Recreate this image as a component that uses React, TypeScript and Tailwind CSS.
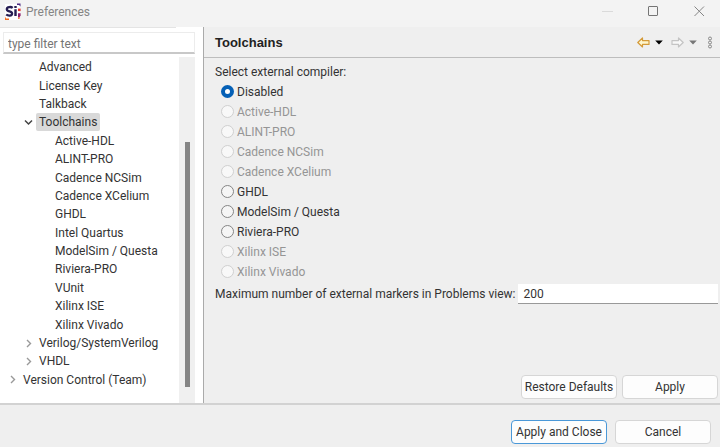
import { useState } from "react";

type TreeNode = { label: string; level: 0 | 1 | 2; arrow?: "open" | "closed" };

const tree: TreeNode[] = [
  { label: "Advanced", level: 1 },
  { label: "License Key", level: 1 },
  { label: "Talkback", level: 1 },
  { label: "Toolchains", level: 1, arrow: "open" },
  { label: "Active-HDL", level: 2 },
  { label: "ALINT-PRO", level: 2 },
  { label: "Cadence NCSim", level: 2 },
  { label: "Cadence XCelium", level: 2 },
  { label: "GHDL", level: 2 },
  { label: "Intel Quartus", level: 2 },
  { label: "ModelSim / Questa", level: 2 },
  { label: "Riviera-PRO", level: 2 },
  { label: "VUnit", level: 2 },
  { label: "Xilinx ISE", level: 2 },
  { label: "Xilinx Vivado", level: 2 },
  { label: "Verilog/SystemVerilog", level: 1, arrow: "closed" },
  { label: "VHDL", level: 1, arrow: "closed" },
  { label: "Version Control (Team)", level: 0, arrow: "closed" },
];

const compilers = [
  { label: "Disabled", enabled: true },
  { label: "Active-HDL", enabled: false },
  { label: "ALINT-PRO", enabled: false },
  { label: "Cadence NCSim", enabled: false },
  { label: "Cadence XCelium", enabled: false },
  { label: "GHDL", enabled: true },
  { label: "ModelSim / Questa", enabled: true },
  { label: "Riviera-PRO", enabled: true },
  { label: "Xilinx ISE", enabled: false },
  { label: "Xilinx Vivado", enabled: false },
];

const indent = { 0: "pl-2", 1: "pl-6", 2: "pl-10" };

const button =
  "h-6 w-24 whitespace-nowrap rounded border bg-[#fdfdfd] text-center leading-4";

function Logo() {
  return (
    <svg width="17" height="18" viewBox="0 0 17 18" aria-hidden="true">
      <rect width="15" height="16" y="1" fill="#fff" />
      <path d="M12 .5h3.500v3L14 2H12z" fill="#4b2a83" />
      <path d="M0 13.500 1 15.500H4V17H0z" fill="#f26a21" />
      <path
        d="M7.700 4.800C6.300 3.700 1.800 3.500 1.800 6.200c0 2.800 5.300 1.500 5.300 4.300 0 2.800-4.300 2.400-5.900 1"
        fill="none"
        stroke="#251c52"
        strokeWidth="2.300"
      />
      <path d="M9.300 6.200h2.400V13H9.300zM9.300 3h2.400v2.100H9.300z" fill="#251c52" />
      <path d="M13 5.600h2.600v2.500H13z" fill="#e4342b" />
      <path d="M13 10.300h2.600v2.300l-1.200 1.900H13z" fill="#8d1d6e" />
      <path d="M13.200 14.500h2l-1 1.500h-1z" fill="#f26a21" />
    </svg>
  );
}

function Chevron({ open }: { open: boolean }) {
  return (
    <svg width="9" height="9" viewBox="0 0 9 9" fill="none" aria-hidden="true">
      {open ? (
        <path d="M1 2.500 4.500 6 8 2.500" stroke="#444" strokeWidth="1.500" />
      ) : (
        <path d="M3 1 6.500 4.500 3 8" stroke="#999" strokeWidth="1.400" />
      )}
    </svg>
  );
}

function HistoryArrow({ forward }: { forward?: boolean }) {
  return (
    <svg width="13" height="11" viewBox="0 0 13 11" aria-hidden="true">
      {forward ? (
        <path
          d="M12.200 5.500 7.500 1V3.600H1V7.400H7.500V10Z"
          fill="#f8f8f8"
          stroke="#c4c4c4"
          strokeWidth="1.200"
          strokeLinejoin="round"
        />
      ) : (
        <path
          d="M.8 5.500 5.500 1V3.600H12V7.400H5.500V10Z"
          fill="#fff6cc"
          stroke="#d49a38"
          strokeWidth="1.200"
          strokeLinejoin="round"
        />
      )}
    </svg>
  );
}

function Caret({ color }: { color: string }) {
  return (
    <svg width="8" height="5" viewBox="0 0 8 5" aria-hidden="true">
      <path d="M.2.5h7.600L4 4.600z" fill={color} />
    </svg>
  );
}

export default function App() {
  const [compiler, setCompiler] = useState("Disabled");
  return (
    <div className="flex min-h-screen flex-col bg-[#efefef] font-[Roboto,'Noto_Sans',sans-serif] text-xs text-[#333]">
      <header className="flex h-[27px] items-start justify-between bg-[#f3f3f3] pr-[15px] pl-[5px]">
        <div className="flex items-center gap-1 pt-[2px]">
          <Logo />
          <h1 className="leading-5 text-[#858585]">Preferences</h1>
        </div>
        <div className="flex gap-[35px] pt-[6px]">
          <button aria-label="Minimize">
            <svg width="11" height="11" viewBox="0 0 11 11" fill="none">
              <path d="M0 5.500h11" stroke="#dadada" />
            </svg>
          </button>
          <button aria-label="Maximize">
            <svg width="11" height="11" viewBox="0 0 11 11" fill="none">
              <rect x=".5" y=".5" width="9" height="9" rx=".5" stroke="#757575" />
            </svg>
          </button>
          <button aria-label="Close">
            <svg width="11" height="11" viewBox="0 0 11 11" fill="none">
              <path d="M.5.5l9.500 9.500M10 .5.5 10" stroke="#858585" />
            </svg>
          </button>
        </div>
      </header>

      <div className="flex flex-1 border-b-2 border-[#d2d2d2]">
        <aside className="flex w-[204px] shrink-0 flex-col border-r border-[#aaa] bg-white">
          <div className="h-px w-44 bg-[#e4e4e4]" />
          <input
            aria-label="Filter preferences"
            placeholder="type filter text"
            className="mt-1 mr-2 ml-[3px] h-[22px] border border-b-2 border-[#ececec] border-b-[#c8c8c8] px-1 pt-[2px] outline-none placeholder:text-[#757575]"
          />
          <div className="mt-[3px] mr-2 flex flex-1">
            <ul role="tree" className="grid flex-1 auto-rows-fr pt-px pb-[14px]">
              {tree.map(({ label, level, arrow }) => (
                <li
                  key={label}
                  role="treeitem"
                  aria-selected={label === "Toolchains"}
                  className={`flex items-center gap-[2px] leading-[18px] whitespace-nowrap ${indent[level]}`}
                >
                  <span className="w-[10px]">
                    {arrow && <Chevron open={arrow === "open"} />}
                  </span>
                  <span
                    className={
                      label === "Toolchains"
                        ? "rounded-xs bg-[#d9d9d9] px-[3px]"
                        : "px-[3px]"
                    }
                  >
                    {label}
                  </span>
                </li>
              ))}
            </ul>
            <div className="flex w-4 justify-center bg-[#f0f0f0] pt-[85px] pb-4">
              <div className="w-[5px] bg-[#858585]" />
            </div>
          </div>
        </aside>

        <main className="flex flex-1 flex-col">
          <div className="flex h-[31px] items-center justify-between border-b border-[#bdbdbd] pr-[7px] pl-[11px]">
            <h2 className="pt-[2px] font-['Liberation_Sans',Arial,sans-serif] text-[13px] font-bold text-[#222]">
              Toolchains
            </h2>
            <div className="flex items-center gap-2">
              <div className="flex items-center gap-[5px]">
                <button aria-label="Back">
                  <HistoryArrow />
                </button>
                <button aria-label="Back history">
                  <Caret color="#000" />
                </button>
              </div>
              <div className="flex items-center gap-[5px]">
                <button aria-label="Forward">
                  <HistoryArrow forward />
                </button>
                <button aria-label="Forward history">
                  <Caret color="#777" />
                </button>
              </div>
              <button aria-label="View menu" className="ml-[2px]">
                <svg width="6" height="13" viewBox="0 0 6 13" fill="none" stroke="#888">
                  <circle cx="3" cy="2.500" r="1.500" />
                  <circle cx="3" cy="6.500" r="1.500" />
                  <circle cx="3" cy="10.500" r="1.500" />
                </svg>
              </button>
            </div>
          </div>

          <div className="flex flex-1 flex-col pt-1 pr-[2px] pb-1 pl-[11px]">
            <fieldset>
              <legend className="leading-5">Select external compiler:</legend>
              {compilers.map(({ label, enabled }) => (
                <label
                  key={label}
                  className={`flex w-fit items-start gap-[3px] pl-[6px] leading-5 ${enabled ? "" : "text-[#959595]"}`}
                >
                  <input
                    type="radio"
                    name="compiler"
                    disabled={!enabled}
                    checked={compiler === label}
                    onChange={() => setCompiler(label)}
                    className="mt-[3px] size-[13px] appearance-none rounded-full border border-[#858585] bg-[#f5f5f5] checked:border-4 checked:border-[#0560b6] checked:bg-white disabled:border-[#d0d0d0] disabled:bg-[#f8f8f8]"
                  />
                  {label}
                </label>
              ))}
            </fieldset>
            <div className="mt-[2px] flex items-center gap-[3px]">
              <label htmlFor="markers" className="whitespace-nowrap">
                Maximum number of external markers in Problems view:
              </label>
              <input
                id="markers"
                defaultValue="200"
                className="h-5 min-w-0 flex-1 border-b border-[#999] bg-white px-[5px] outline-none"
              />
            </div>
            <div className="mt-auto flex justify-end gap-[5px]">
              <button className={`${button} border-[#d6d6d6]`}>Restore Defaults</button>
              <button className={`${button} border-[#d6d6d6]`}>Apply</button>
            </div>
          </div>
        </main>
      </div>

      <footer className="flex justify-end gap-2 pt-[15px] pr-[9px] pb-[3px]">
        <button className={`${button} border-[#4a98d8]`}>Apply and Close</button>
        <button className={`${button} border-[#d6d6d6]`}>Cancel</button>
      </footer>
    </div>
  );
}
